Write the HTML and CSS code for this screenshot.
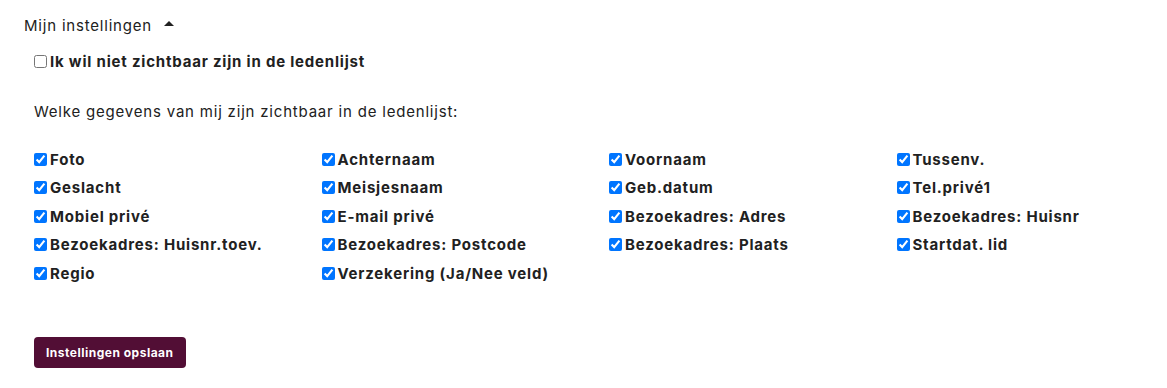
FILE: index.html
```html
<!DOCTYPE html>
<html lang="nl">
<head>
    <meta charset="UTF-8">
    <title>Mijn instellingen</title>
    <link rel="stylesheet" href="styles.css">
</head>
<body>
    <div class="settings">
        <div class="settings-toggle">
            Mijn instellingen
            <span class="caret"></span>
        </div>

        <div class="settings-body">
            <label class="check hide-me">
                <input type="checkbox">
                <span>Ik wil niet zichtbaar zijn in de ledenlijst</span>
            </label>

            <p class="intro">Welke gegevens van mij zijn zichtbaar in de ledenlijst:</p>

            <div class="field-grid">
                <label class="check"><input type="checkbox" checked><span>Foto</span></label>
                <label class="check"><input type="checkbox" checked><span>Achternaam</span></label>
                <label class="check"><input type="checkbox" checked><span>Voornaam</span></label>
                <label class="check"><input type="checkbox" checked><span>Tussenv.</span></label>

                <label class="check"><input type="checkbox" checked><span>Geslacht</span></label>
                <label class="check"><input type="checkbox" checked><span>Meisjesnaam</span></label>
                <label class="check"><input type="checkbox" checked><span>Geb.datum</span></label>
                <label class="check"><input type="checkbox" checked><span>Tel.privé1</span></label>

                <label class="check"><input type="checkbox" checked><span>Mobiel privé</span></label>
                <label class="check"><input type="checkbox" checked><span>E-mail privé</span></label>
                <label class="check"><input type="checkbox" checked><span>Bezoekadres: Adres</span></label>
                <label class="check"><input type="checkbox" checked><span>Bezoekadres: Huisnr</span></label>

                <label class="check"><input type="checkbox" checked><span>Bezoekadres: Huisnr.toev.</span></label>
                <label class="check"><input type="checkbox" checked><span>Bezoekadres: Postcode</span></label>
                <label class="check"><input type="checkbox" checked><span>Bezoekadres: Plaats</span></label>
                <label class="check"><input type="checkbox" checked><span>Startdat. lid</span></label>

                <label class="check"><input type="checkbox" checked><span>Regio</span></label>
                <label class="check"><input type="checkbox" checked><span>Verzekering (Ja/Nee veld)</span></label>
            </div>

            <button class="save-btn">Instellingen opslaan</button>
        </div>
    </div>
</body>
</html>
```

FILE: styles.css
```css
* {
    margin: 0;
    padding: 0;
    box-sizing: border-box;
}

body {
    background: #ffffff;
    color: #212121;
    font-family: 'Inter', 'Liberation Sans', sans-serif;
    font-size: 15px;
    letter-spacing: 0.8px;
}

.settings {
    padding: 13px 0 0 24px;
}

.settings-toggle {
    display: flex;
    align-items: center;
    height: 24px;
    font-size: 15px;
    cursor: pointer;
}

.caret {
    display: inline-block;
    width: 0;
    height: 0;
    margin-left: 12px;
    border-left: 5px solid transparent;
    border-right: 5px solid transparent;
    border-bottom: 5px solid #212121;
    margin-top: -3px;
}

.settings-body {
    padding-left: 10px;
}

.check {
    display: flex;
    align-items: center;
    height: 24px;
    font-weight: 700;
    font-size: 15px;
    white-space: nowrap;
}

.check input {
    width: 13px;
    height: 13px;
    margin: 0 3px 0 0;
}

.hide-me {
    margin-top: 12px;
}

.intro {
    margin-top: 27px;
    line-height: 24px;
}

.field-grid {
    display: grid;
    grid-template-columns: repeat(4, 287.5px);
    row-gap: 4.5px;
    margin-top: 23px;
}

.save-btn {
    margin-top: 52px;
    height: 31px;
    padding: 0 12px;
    background: #520e35;
    color: #fff;
    border: none;
    border-radius: 4px;
    font-family: inherit;
    font-size: 12px;
    font-weight: 700;
    letter-spacing: 0.5px;
    cursor: pointer;
}
```
